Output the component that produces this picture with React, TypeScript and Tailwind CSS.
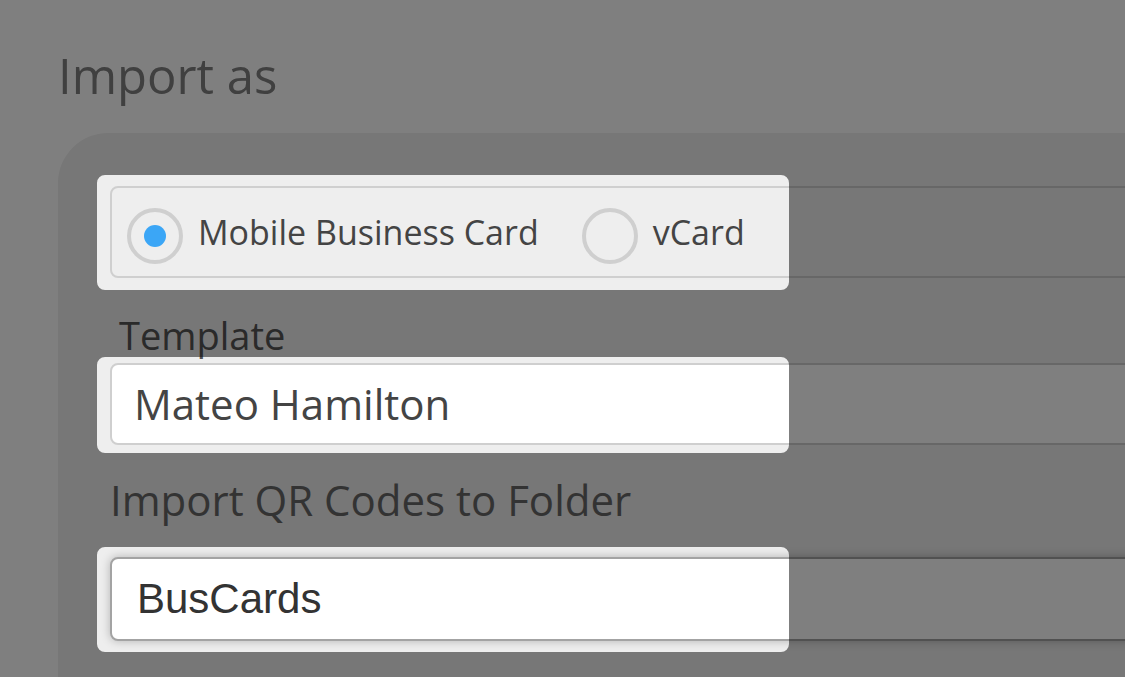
const holes = [
  { x: 97, y: 175, w: 692, h: 115 },
  { x: 97, y: 357, w: 692, h: 96 },
  { x: 97, y: 547, w: 692, h: 105 },
]

function roundRect({ x, y, w, h }: { x: number; y: number; w: number; h: number }, r = 8) {
  return `M${x + r} ${y}H${x + w - r}A${r} ${r} 0 0 1 ${x + w} ${y + r}V${y + h - r}A${r} ${r} 0 0 1 ${x + w - r} ${y + h}H${x + r}A${r} ${r} 0 0 1 ${x} ${y + h - r}V${y + r}A${r} ${r} 0 0 1 ${x + r} ${y}Z`
}

function Radio({ checked, label }: { checked?: boolean; label: string }) {
  return (
    <label className="flex items-center gap-[15px]">
      <span className="flex h-[56px] w-[56px] items-center justify-center rounded-full border-[4px] border-[#cfcfcf]">
        {checked && <span className="h-[22px] w-[22px] rounded-full bg-[#3ba6f6]" />}
      </span>
      <span className="pb-[8px] text-[34px] leading-[48px] text-[#444]">{label}</span>
    </label>
  )
}

export default function App() {
  return (
    <div className="relative h-[677px] w-[1125px] overflow-hidden bg-white font-['Open_Sans',sans-serif]">
      <h2 className="pl-[58px] pt-[40px] text-[49px] leading-[71px] text-[#808080]">Import as</h2>

      <div className="ml-[58px] mt-[22px] w-[1200px] rounded-tl-[50px] bg-[#eeeeee] pl-[52px] pt-[53px] pb-[40px]">
        <div className="flex h-[92px] items-center gap-[43px] rounded-[8px] border-2 border-[#cfcfcf] pl-[15px] pt-[7px]">
          <Radio checked label="Mobile Business Card" />
          <Radio label="vCard" />
        </div>

        <div className="ml-[9px] mt-[31px] text-[38px] leading-[52px] text-[#555]">Template</div>
        <div className="mt-[2px] flex h-[82px] items-center rounded-[8px] border-2 border-[#cfcfcf] bg-white pl-[22px]">
          <span className="text-[42px] leading-[56px] text-[#444]">Mateo Hamilton</span>
        </div>

        <div className="mt-[26px] text-[42px] leading-[57px] text-[#666]">Import QR Codes to Folder</div>
        <div className="mt-[29px] flex h-[84px] items-center rounded-[8px] border-2 border-[#a3a3a3] bg-white pl-[25px] shadow-[0_0_10px_rgba(0,0,0,0.25)]">
          <span className="font-['Liberation_Sans',Arial,sans-serif] text-[42px] leading-[48px] text-[#333]">BusCards</span>
        </div>
      </div>

      <svg className="pointer-events-none absolute inset-0" width="1125" height="677">
        <path
          fillRule="evenodd"
          fill="rgba(0,0,0,0.5)"
          d={`M0 0H1125V677H0Z ${holes.map((h) => roundRect(h)).join(' ')}`}
        />
      </svg>
    </div>
  )
}
